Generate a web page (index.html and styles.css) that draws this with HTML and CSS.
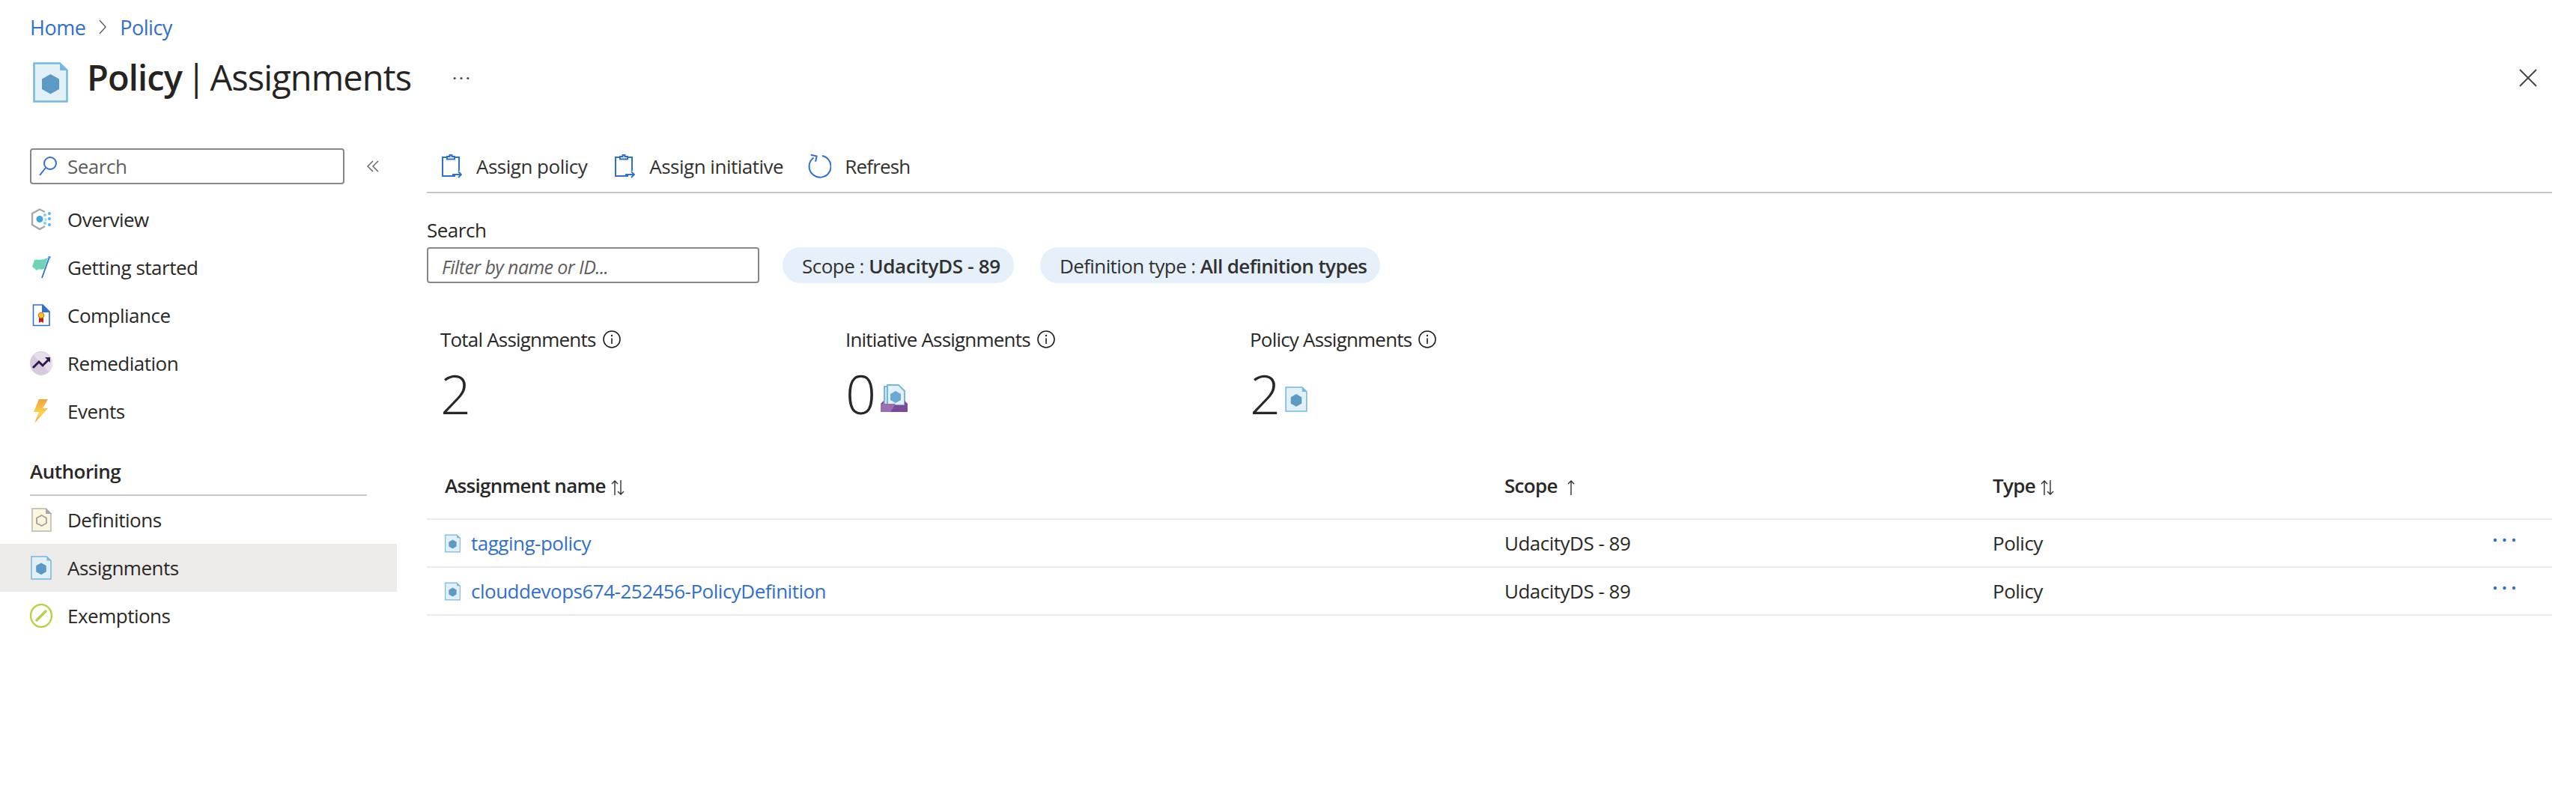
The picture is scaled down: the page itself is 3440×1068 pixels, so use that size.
FILE: index.html
```html
<!DOCTYPE html>
<html lang="en">
<head>
    <meta charset="UTF-8">
    <title>Policy | Assignments</title>
    <link rel="stylesheet" href="styles.css">
</head>
<body>
    <svg class="defs" width="0" height="0">
        <symbol id="policy" viewBox="0 0 47 54">
            <path d="M1.5 1.5H36L45.5 11V52.5H1.5Z" fill="#e2f0f8" stroke="#74b8df" stroke-width="2.5"/>
            <path d="M36 1L46 11H36Z" fill="#74b8df"/>
            <path d="M23.5 16L35 22.5V36L23.5 42.5L12 36V22.5Z" fill="#5a9ac5"/>
        </symbol>
        <symbol id="clipboard" viewBox="0 0 27 32">
            <path d="M18 29H1V4H7M17 4H23V22" fill="none" stroke="#2f6fd0" stroke-width="2"/>
            <path d="M7 6.5V3H10.5V1H13.5V3H17V6.5Z" fill="none" stroke="#2f6fd0" stroke-width="2"/>
            <path d="M14 27H26M22 23L26 27L22 31" fill="none" stroke="#2f6fd0" stroke-width="1.8"/>
        </symbol>
        <symbol id="sort" viewBox="0 0 20 22">
            <path d="M6 21V2M2 6L6 2L10 6M14 1V20M10 16L14 20L18 16" fill="none" stroke="#323130" stroke-width="1.4"/>
        </symbol>
        <symbol id="info" viewBox="0 0 24 24">
            <circle cx="12" cy="12" r="11" fill="none" stroke="#1f1e1d" stroke-width="1.6"/>
            <path d="M12 10.5V18" stroke="#1f1e1d" stroke-width="1.6"/>
            <circle cx="12" cy="7" r="1.2" fill="#1f1e1d"/>
        </symbol>
        <symbol id="dots" viewBox="0 0 31 6">
            <circle cx="3" cy="3" r="2.2"/><circle cx="15.500" cy="3" r="2.2"/><circle cx="28" cy="3" r="2.2"/>
        </symbol>
    </svg>

    <div class="crumbs">
        <a href="#">Home</a>
        <svg class="crumb-sep" viewBox="0 0 10 20" width="10" height="20"><path d="M1 1L9 10L1 19" fill="none" stroke="#605e5c" stroke-width="1.4"/></svg>
        <a href="#">Policy</a>
    </div>

    <div class="head">
        <svg class="head-icon" width="47" height="54"><use href="#policy"/></svg>
        <h1><b>Policy</b> | Assignments</h1>
        <svg class="head-more" width="22" height="5"><use href="#dots"/></svg>
        <svg class="close" viewBox="0 0 24 24" width="24" height="24"><path d="M1 1L23 23M23 1L1 23" stroke="#484644" stroke-width="2"/></svg>
    </div>

    <div class="body">
        <div class="side">
            <div class="side-top">
                <div class="side-search">
                    <svg viewBox="0 0 24 28" width="24" height="28"><circle cx="15" cy="10" r="8" fill="none" stroke="#2f6fd0" stroke-width="2"/><path d="M9 16L1 26" stroke="#2f6fd0" stroke-width="2"/></svg>
                    <span>Search</span>
                </div>
                <svg class="collapse" viewBox="0 0 16 16" width="16" height="16"><path d="M8 1L1 8L8 15M15 1L8 8L15 15" fill="none" stroke="#605e5c" stroke-width="1.4"/></svg>
            </div>

            <a class="nav" href="#">
                <svg viewBox="0 0 30 30" width="30" height="30">
                    <path d="M20 5L13 1.5L3 7V22L13 28L20 24" fill="none" stroke="#a8a8a8" stroke-width="2.4"/>
                    <circle cx="13" cy="14.5" r="4.5" fill="#3fa6dc"/>
                    <circle cx="20" cy="9" r="2" fill="#7fd0f0"/><circle cx="26" cy="7" r="2" fill="#50b8e8"/>
                    <circle cx="21" cy="15" r="2" fill="#a8e2f7"/><circle cx="26" cy="14" r="2" fill="#50b8e8"/>
                    <circle cx="20" cy="20" r="2" fill="#7fd0f0"/><circle cx="26" cy="22" r="2" fill="#50b8e8"/>
                </svg>
                Overview
            </a>
            <a class="nav" href="#">
                <svg viewBox="0 0 30 32" width="30" height="32">
                    <path d="M3 15L6 6C10 4 14 8 24 3L19 18C15 20 12 17 9 20Z" fill="#6fd3b5"/>
                    <path d="M26 2L16 30" stroke="#2f6fd0" stroke-width="1.8"/>
                    <circle cx="26" cy="2.500" r="1.800" fill="#5a9be0"/>
                </svg>
                Getting started
            </a>
            <a class="nav" href="#">
                <svg viewBox="0 0 30 32" width="30" height="32">
                    <path d="M4.500 2H17L26 11V29.500H4.500Z" fill="#fff" stroke="#2f6fd0" stroke-width="1.600"/>
                    <path d="M16 1L27 12H16Z" fill="#2f6fd0"/>
                    <path d="M12 18H18V26L15 24.500L12 26Z" fill="#b3261e"/>
                    <circle cx="15" cy="16" r="3.800" fill="#f5c22b" stroke="#d9681d" stroke-width="1"/>
                </svg>
                Compliance
            </a>
            <a class="nav" href="#">
                <svg viewBox="0 0 30 32" width="30" height="32">
                    <ellipse cx="15" cy="16" rx="15" ry="16" fill="#d8cadd"/>
                    <path d="M5 5L26 28A15 16 0 0 0 25 5A15 16 0 0 0 5 5Z" fill="#e6dfea"/>
                    <path d="M4 22L12 14L17 19L26 10" fill="none" stroke="#32174d" stroke-width="3"/>
                    <path d="M20 8H27V15Z" fill="#32174d"/>
                </svg>
                Remediation
            </a>
            <a class="nav" href="#">
                <svg viewBox="0 0 22 32" width="30" height="32">
                    <defs><linearGradient id="bolt" x1="0" y1="0" x2="0" y2="1"><stop offset="0" stop-color="#f4a13a"/><stop offset="0.6" stop-color="#fbd54a"/><stop offset="1" stop-color="#f4a13a"/></linearGradient></defs>
                    <path d="M8 0H20L13 12H20L2 32L8 17H1Z" fill="url(#bolt)"/>
                </svg>
                Events
            </a>

            <div class="side-head">Authoring</div>

            <a class="nav" href="#">
                <svg viewBox="0 0 30 32" width="30" height="32">
                    <path d="M3 1H21L28 8V31H3Z" fill="#fdf6df" stroke="#c8c6c4" stroke-width="2"/>
                    <path d="M21 0L29 8H21Z" fill="#a8a6a4"/>
                    <path d="M15.500 10L22 13.500V20.500L15.500 24L9 20.500V13.500Z" fill="none" stroke="#a19f9d" stroke-width="1.800"/>
                </svg>
                Definitions
            </a>
            <a class="nav on" href="#">
                <svg width="30" height="32"><use href="#policy"/></svg>
                Assignments
            </a>
            <a class="nav" href="#">
                <svg viewBox="0 0 30 32" width="30" height="32">
                    <ellipse cx="15" cy="16" rx="14" ry="15" fill="none" stroke="#b5d14a" stroke-width="2.400"/>
                    <path d="M8 23L22 9" stroke="#b5d14a" stroke-width="3.600"/>
                </svg>
                Exemptions
            </a>
        </div>

        <div class="main">
            <div class="toolbar">
                <a class="tool" href="#"><svg width="27" height="32"><use href="#clipboard"/></svg>Assign policy</a>
                <a class="tool" href="#"><svg width="27" height="32"><use href="#clipboard"/></svg>Assign initiative</a>
                <a class="tool refresh" href="#">
                    <svg viewBox="0 0 32 32" width="32" height="32">
                        <path d="M8.500 4.500A14.500 14.500 0 1 0 20 2" fill="none" stroke="#2f6fd0" stroke-width="2"/>
                        <path d="M4 1.500H12V9" fill="none" stroke="#2f6fd0" stroke-width="2" transform="rotate(12 8 5)"/>
                    </svg>
                    Refresh
                </a>
            </div>

            <label class="filter-label">Search</label>
            <div class="filters">
                <div class="filter-input">Filter by name or ID...</div>
                <div class="pill">Scope : <b>UdacityDS - 89</b></div>
                <div class="pill">Definition type : <b>All definition types</b></div>
            </div>

            <div class="stats">
                <div class="stat">
                    <div class="stat-label">Total Assignments <svg width="24" height="24"><use href="#info"/></svg></div>
                    <div class="stat-num">2</div>
                </div>
                <div class="stat">
                    <div class="stat-label">Initiative Assignments <svg width="24" height="24"><use href="#info"/></svg></div>
                    <div class="stat-num">0
                        <svg viewBox="0 0 36 37" width="36" height="37">
                            <path d="M5 3H22L31 12V30H5Z" fill="#cfe6f4" stroke="#74b8df" stroke-width="2"/>
                            <path d="M9 1H24L32 9V28H9Z" fill="#e2f0f8" stroke="#74b8df" stroke-width="2"/>
                            <path d="M20 9L27 13V21L20 25L13 21V13Z" fill="#6aa9d3"/>
                            <path d="M0 37V26L4 22V28H32V22L36 26V37Z" fill="#7c4a9c"/>
                            <path d="M0 37V26H20L13 37Z" fill="#9a70ae"/>
                        </svg>
                    </div>
                </div>
                <div class="stat">
                    <div class="stat-label">Policy Assignments <svg width="24" height="24"><use href="#info"/></svg></div>
                    <div class="stat-num">2 <svg width="30" height="34"><use href="#policy"/></svg></div>
                </div>
            </div>

            <div class="grid">
                <div class="row row-head">
                    <div>Assignment name <svg width="20" height="22"><use href="#sort"/></svg></div>
                    <div>Scope <svg class="sort-up" viewBox="0 0 12 22" width="12" height="22"><path d="M6 21V2M2 6L6 2L10 6" fill="none" stroke="#323130" stroke-width="1.4"/></svg></div>
                    <div>Type <svg width="20" height="22"><use href="#sort"/></svg></div>
                    <div></div>
                </div>
                <div class="row">
                    <a class="name" href="#"><svg width="21" height="25"><use href="#policy"/></svg>tagging-policy</a>
                    <div>UdacityDS - 89</div>
                    <div>Policy</div>
                    <div class="more"><svg width="31" height="6"><use href="#dots"/></svg></div>
                </div>
                <div class="row">
                    <a class="name" href="#"><svg width="21" height="25"><use href="#policy"/></svg>clouddevops674-252456-PolicyDefinition</a>
                    <div>UdacityDS - 89</div>
                    <div>Policy</div>
                    <div class="more"><svg width="31" height="6"><use href="#dots"/></svg></div>
                </div>
            </div>
        </div>
    </div>
</body>
</html>
```

FILE: styles.css
```css
body{
    margin: 0;
    background: #fff;
    color: #292827;
    font-family: "Open Sans", "Liberation Sans", sans-serif;
    font-size: 26px;
    letter-spacing: -0.5px;
}
a{
    color: inherit;
    text-decoration: none;
}
b,.side-head,.row-head{
    font-weight: 600;
}
svg{
    flex: none;
}
.defs{
    display: block;
    height: 0;
}

/* top */
.crumbs{
    display: flex;
    align-items: center;
    gap: 18px;
    height: 72px;
    padding-left: 40px;
    color: #2f6fd0;
    font-size: 27px;
}
.head{
    display: flex;
    align-items: center;
    height: 64px;
    padding: 0 32px 0 44px;
}
.head-icon{
    margin: 12px 25px 0 0;
}
.head h1{
    margin: 0 0 3px;
    font-size: 47px;
    font-weight: 400;
    letter-spacing: -0.9px;
    word-spacing: -5px;
    color: #252423;
}
.head h1 b{
    font-weight: 600;
}
.head-more{
    margin-left: 56px;
    fill: #484644;
}
.close{
    margin-left: auto;
    margin-right: 20px;
}

/* side menu */
.body{
    display: flex;
    padding-top: 62px;
}
.side{
    width: 530px;
    flex: none;
}
.side-top{
    display: flex;
    align-items: center;
    padding: 0 24px 15px 40px;
    gap: 30px;
}
.side-search{
    display: flex;
    align-items: center;
    gap: 14px;
    box-sizing: border-box;
    width: 420px;
    height: 48px;
    padding-left: 10px;
    border: 2px solid #8a8886;
    border-radius: 4px;
    color: #605e5c;
}
.nav{
    display: flex;
    align-items: center;
    gap: 20px;
    height: 64px;
    padding-left: 40px;
}
.nav.on{
    background: #edebe9;
}
.side-head{
    height: 81px;
    margin: 0 40px;
    box-sizing: border-box;
    padding-top: 30px;
    border-bottom: 2px solid #c8c6c4;
}

/* main part */
.main{
    flex: 1;
    margin: 0 32px 0 40px;
    min-width: 0;
}
.toolbar{
    display: flex;
    align-items: center;
    gap: 32px;
    padding: 0 0 10px 20px;
    box-sizing: border-box;
    border-bottom: 2px solid #c8c6c4;
    height: 60px;
}
.tool{
    display: flex;
    align-items: center;
    gap: 19px;
    color: #323130;
}
.tool:first-child{
    margin-right: 5px;
}
.refresh{
    gap: 18px;
    letter-spacing: -0.8px;
}
.filter-label{
    display: block;
    margin-top: 31px;
    line-height: 36px;
}
.filters{
    display: flex;
    gap: 35px;
    margin-top: 5px;
}
.filter-input{
    box-sizing: border-box;
    width: 444px;
    height: 48px;
    margin-right: -4px;
    padding-left: 18px;
    line-height: 48px;
    border: 2px solid #8a8886;
    border-radius: 4px;
    color: #605e5c;
    font-size: 25px;
    font-style: italic;
    letter-spacing: -0.6px;
}
.pill{
    height: 48px;
    line-height: 50px;
    padding: 0 18px 0 26px;
    border-radius: 24px;
    background: #e5f0fa;
    color: #323130;
}
.pill b{
    letter-spacing: -0.3px;
}
.pill:last-child,.pill:last-child b{
    letter-spacing: -0.6px;
}
.stats{
    display: grid;
    grid-template-columns: 541px 540px 1fr;
    margin-top: 57px;
    padding-left: 18px;
}
.stat-label{
    display: flex;
    align-items: center;
    gap: 9px;
    height: 36px;
    letter-spacing: -0.8px;
}
.stat-num{
    display: flex;
    align-items: flex-end;
    gap: 6px;
    height: 99px;
    font-size: 72px;
    font-weight: 300;
    line-height: 90px;
    letter-spacing: 0;
}
.stat-num svg{
    margin-bottom: 20px;
}

/* table */
.grid{
    margin-top: 34px;
}
.row{
    display: grid;
    grid-template-columns: 1439px 652px 1fr auto;
    align-items: center;
    height: 64px;
    box-sizing: border-box;
    border-bottom: 2px solid #edebe9;
}
.row>div:first-child,.name{
    padding-left: 24px;
}
.row-head{
    height: 90px;
    letter-spacing: -0.7px;
}
.row-head svg{
    vertical-align: middle;
}
.sort-up{
    margin-left: 6px;
}
.name{
    display: flex;
    align-items: center;
    gap: 14px;
    color: #2f6fd0;
}
.more{
    display: flex;
    width: 79px;
    margin-bottom: 8px;
    fill: #2f6fd0;
}
```
